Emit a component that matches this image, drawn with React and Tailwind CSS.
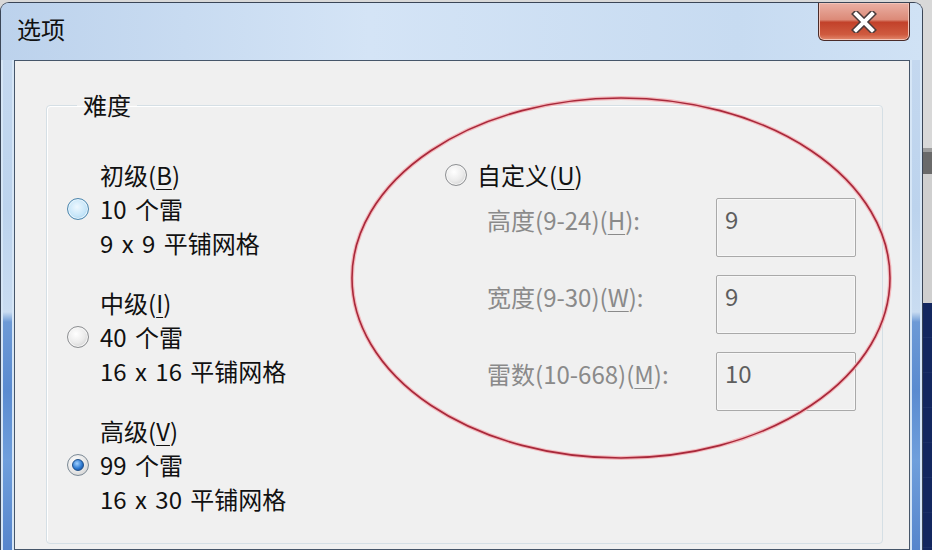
import React from "react"

const font = "font-['Noto_Sans_CJK_SC','Noto_Sans',sans-serif]"

function Key({ children }) {
  return <span className="underline decoration-1 underline-offset-[4px]">{children}</span>
}

function Radio({ state }) {
  if (state === "checked") {
    return (
      <span className="flex h-[22px] w-[22px] shrink-0 items-center justify-center rounded-full border border-[#7c8a96] bg-[radial-gradient(circle_at_40%_35%,#ffffff,#e6e6e6_55%,#c9c9c9)]">
        <span className="h-[12px] w-[12px] rounded-full border border-[#1d4f8a] bg-[radial-gradient(circle_at_40%_35%,#9fd0ff,#2f7bd2_55%,#0c3f86)]" />
      </span>
    )
  }
  if (state === "hover") {
    return (
      <span className="h-[22px] w-[22px] shrink-0 rounded-full border border-[#4f87ad] bg-[radial-gradient(circle_at_45%_40%,#eef8ff,#c7e6f9_55%,#8fc4e6)] shadow-[inset_0_0_0_1px_#e8f5fd]" />
    )
  }
  return (
    <span className="h-[22px] w-[22px] shrink-0 rounded-full border border-[#8d8f92] bg-[radial-gradient(circle_at_40%_35%,#ffffff,#ebebeb_50%,#c4c4c4)] shadow-[inset_0_0_0_1px_#f6f6f6]" />
  )
}

function Level({ name, k, mines, grid, state }) {
  return (
    <div className="flex flex-col">
      <div className="pl-[33px]">
        {name}(<Key>{k}</Key>)
      </div>
      <div className="flex items-center gap-[11px]">
        <Radio state={state} />
        <span>{mines} 个雷</span>
      </div>
      <div className="pl-[33px]">{grid} 平铺网格</div>
    </div>
  )
}

function Field({ label, range, k, value }) {
  return (
    <div className="flex items-start">
      <div className="w-[229px] pt-[5px] text-[#8a8a8a]">
        {label}({range})(<Key>{k}</Key>):
      </div>
      <div className="h-[59px] w-[140px] rounded-[2px] border border-[#a9a9a9] bg-[#f0f0f0] pl-[8px] pt-[3px] text-[#5e5e5e] shadow-[inset_0_0_0_1px_#f7f7f7]">
        {value}
      </div>
    </div>
  )
}

export default function App() {
  return (
    <div className={`relative flex h-[550px] w-[932px] overflow-hidden bg-[#d9d9d9] text-[24px] leading-[34px] text-[#111111] [word-spacing:3px] ${font}`}>
      {/* window */}
      <div className="mt-[2px] flex w-[923px] shrink-0 flex-col rounded-t-[9px] border border-b-0 border-[#3a4556] bg-[#c9dcf1]">
        <div className="flex h-[57px] items-start justify-between rounded-t-[8px] bg-[linear-gradient(to_right,#bcd2ec,#d4e4f6_40%,#c7dbf1_80%,#d0e2f5)]">
          <span className="ml-[16px] mt-[9px] text-[#111]">选项</span>
          <button className="mr-[12px] flex h-[38px] w-[92px] items-center justify-center rounded-b-[6px] border border-t-0 border-[#4a2c2a] bg-[linear-gradient(to_bottom,#eab0a4,#dc8a78_45%,#c2412a_52%,#cf5a3f_85%,#e38a6e)] shadow-[inset_0_0_0_1px_#f2c4b8]">
            <svg width="26" height="22" viewBox="0 0 26 22">
              <path d="M5 3 L21 19 M21 3 L5 19" stroke="#4a3a3a" strokeWidth="7" strokeLinecap="square" />
              <path d="M5 3 L21 19 M21 3 L5 19" stroke="#ffffff" strokeWidth="4" strokeLinecap="square" />
            </svg>
          </button>
        </div>
        <div className="flex flex-1">
          <div className="flex w-[13px] bg-[#d6e6f6] px-[2px]">
            <div className="flex-1 bg-[linear-gradient(to_bottom,#c4d8ef_0px,#bcd3ed_150px,#c9dcf1_252px,#6d9ad6_262px,#5a8bd0_330px,#6f9fdc_400px,#5685cc_100%)]" />
          </div>
          <div className="flex-1 border border-[#46566a] bg-[#f0f0f0] pl-[31px] pr-[26px] pt-[27px]">
            <fieldset className="rounded-[4px] border border-[#d5dfe5] pb-[27px] pl-[20px] pt-[36px] shadow-[inset_1px_1px_0_#ffffff]">
              <legend className="ml-[10px] px-[6px]">难度</legend>
              <div className="flex">
                <div className="flex w-[378px] flex-col gap-[26px]">
                  <Level name="初级" k="B" mines="10" grid="9 x 9" state="hover" />
                  <Level name="中级" k="I" mines="40" grid="16 x 16" state="off" />
                  <Level name="高级" k="V" mines="99" grid="16 x 30" state="checked" />
                </div>
                <div className="flex flex-col">
                  <div className="flex items-center gap-[10px]">
                    <Radio state="off" />
                    <span>
                      自定义(<Key>U</Key>)
                    </span>
                  </div>
                  <div className="mt-[6px] flex flex-col gap-[18px] pl-[42px]">
                    <Field label="高度" range="9-24" k="H" value="9" />
                    <Field label="宽度" range="9-30" k="W" value="9" />
                    <Field label="雷数" range="10-668" k="M" value="10" />
                  </div>
                </div>
              </div>
            </fieldset>
          </div>
          <div className="flex w-[12px] bg-[#d6e6f6] px-[2px]">
            <div className="flex-1 bg-[linear-gradient(to_bottom,#c4d8ef_0px,#bcd3ed_150px,#c9dcf1_252px,#6d9ad6_262px,#5a8bd0_330px,#6f9fdc_400px,#5685cc_100%)]" />
          </div>
        </div>
      </div>
      {/* desktop behind */}
      <div className="flex flex-1 flex-col">
        <div className="h-[148px] bg-[#d8d8d8]" />
        <div className="h-[4px] bg-[#9c9c9c]" />
        <div className="h-[22px] bg-[#6a6a6a]" />
        <div className="h-[129px] bg-[#cfcfcf]" />
        <div className="flex-1 bg-[repeating-linear-gradient(to_bottom,#13275f_0px,#13275f_34px,#24386e_35px)]" />
      </div>
      {/* annotation */}
      <svg className="pointer-events-none absolute left-0 top-0" width="932" height="550">
        <ellipse cx="621" cy="278" rx="269" ry="180" fill="none" stroke="#f3b9bd" strokeWidth="4" />
        <ellipse cx="621" cy="278" rx="269" ry="180" fill="none" stroke="#a8283a" strokeWidth="1.6" />
      </svg>
    </div>
  )
}
